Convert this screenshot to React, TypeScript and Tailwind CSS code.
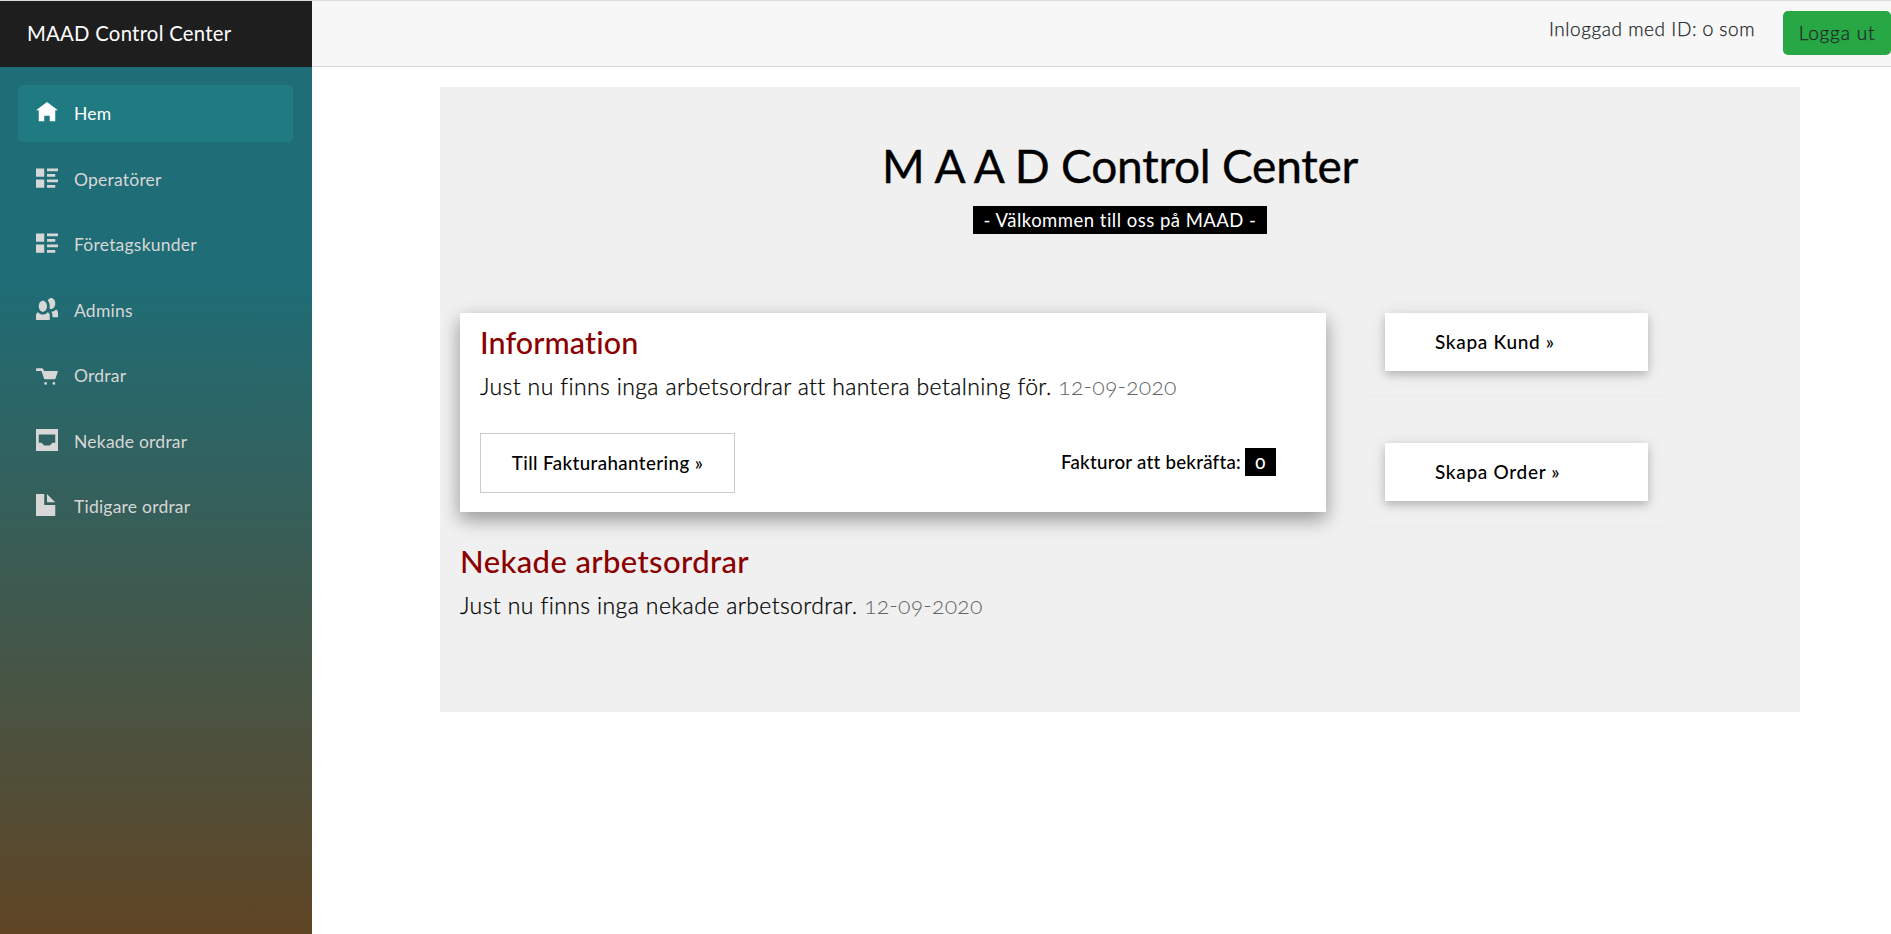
import type { ReactNode } from "react";

type IconName = "home" | "list" | "people" | "cart" | "inbox" | "file";

const ICONS: Record<IconName, ReactNode> = {
  home: <path transform="translate(0 .4)" d="M4 0l-4 3h1v4h2v-2h2v2h2v-4.03l1 .03-4-3z" />,
  list: (
    <path
      transform="translate(0 .55)"
      d="M0 0v3h3v-3h-3zm4 0v1h4v-1h-4zm0 2v1h3v-1h-3zm-4 2v3h3v-3h-3zm4 0v1h4v-1h-4zm0 2v1h3v-1h-3z"
    />
  ),
  people: (
    <path d="M5.5 0c-.51 0-.95.35-1.22.88.45.54.72 1.275.72 2.125 0 .29-.03.55-.09.81.19.11.38.19.59.19.83 0 1.5-.9 1.5-2s-.67-2-1.5-2zm-3 1c-.83 0-1.5.9-1.5 2s.67 2 1.5 2 1.5-.9 1.5-2-.67-2-1.5-2zm4.75 3.16c-.43.51-1.02.82-1.69.84.27.38.44.84.44 1.34v.66h2v-1.66c0-.52-.31-.97-.75-1.19zm-6.5 1c-.44.22-.75.67-.75 1.19v1.66h5v-1.66c0-.52-.31-.97-.75-1.19-.45.53-1.06.84-1.75.84s-1.3-.32-1.75-.84z" />
  ),
  cart: (
    <path
      transform="translate(0 1.95)"
      d="M.34 0a.5.5 0 0 0 .16 1h1.5l.09.25.41 1.25.41 1.16c.04.13.21.34.34.34h3.5c.14 0 .3-.21.34-.34l.81-2.31c.04-.13-.02-.35-.16-.35h-4.75l-.38-.72a.5.5 0 0 0-.44-.28h-1.75zm3.16 5a.5.5 0 1 0 0 1 .5.5 0 0 0 0-1zm3 0a.5.5 0 1 0 0 1 .5.5 0 0 0 0-1z"
    />
  ),
  inbox: <path fillRule="evenodd" d="M0 0v8h8v-8h-8zm1 2h6v3h-1l-1 1h-2l-1-1h-1v-3z" />,
  file: <path d="M0 0v8h7v-4h-4v-4h-3zm4 0v3h3l-3-3z" />,
};

const NAV: { icon: IconName; label: string; active?: boolean }[] = [
  { icon: "home", label: "Hem", active: true },
  { icon: "list", label: "Operatörer" },
  { icon: "list", label: "Företagskunder" },
  { icon: "people", label: "Admins" },
  { icon: "cart", label: "Ordrar" },
  { icon: "inbox", label: "Nekade ordrar" },
  { icon: "file", label: "Tidigare ordrar" },
];

function NavItem({ icon, label, active }: { icon: IconName; label: string; active?: boolean }) {
  return (
    <a
      className={
        active
          ? "flex h-[57px] items-start rounded-[5px] bg-[#1f7a82] pl-[18px] text-white"
          : "flex h-[57px] items-start rounded-[5px] pl-[18px] text-[#d7d7d7]"
      }
    >
      <svg viewBox="0 0 8 8" className="mt-4 h-[22px] w-[22px] shrink-0 fill-current">
        {ICONS[icon]}
      </svg>
      <span className="ml-4 text-[17.5px] leading-[58px] tracking-[0.22px]">{label}</span>
    </a>
  );
}

function ActionCard({ label }: { label: string }) {
  return (
    <div className="h-[130px]">
      <div className="ml-5 h-[58px] w-[263px] bg-white pl-[50px] text-[19px] leading-[58px] font-medium tracking-[0.68px] shadow-[0_4px_8px_rgba(0,0,0,0.18),0_2px_16px_rgba(0,0,0,0.1)]">
        {label}
      </div>
      <div className="mt-[25px] h-px w-[302px] bg-[#ececec]" />
    </div>
  );
}

export default function App() {
  return (
    <div className="flex h-[934px] flex-col overflow-hidden bg-white font-['Lato','Liberation_Sans',sans-serif] text-black [font-variant-ligatures:none] [font-variant-numeric:oldstyle-nums]">
      <div className="h-px shrink-0 bg-[#dadade]" />
      <div className="flex min-h-0 flex-1">
        <aside className="flex w-[312px] shrink-0 flex-col bg-[linear-gradient(180deg,#1f6d76_30%,#604525_100%)]">
          <div className="h-[66px] bg-[#1e1e1e] pl-[27px] text-[20.3px] leading-[64px] tracking-[0.27px] text-white">
            MAAD Control Center
          </div>
          <nav className="flex flex-col gap-[8.5px] pt-[18px] pr-[19px] pl-[18px]">
            {NAV.map((item) => (
              <NavItem key={item.label} {...item} />
            ))}
          </nav>
        </aside>

        <div className="flex min-w-0 flex-1 flex-col">
          <header className="flex h-[66px] shrink-0 justify-end border-b border-[#d6d5d5] bg-[#f7f7f7] font-light text-[#212529] [-webkit-text-stroke:0.25px]">
            <span className="mr-7 text-[19px] leading-[56px] tracking-[0.57px]">Inloggad med ID: 0 som</span>
            <button className="mt-[10px] h-11 w-[108px] rounded-[5px] bg-[#28a745] text-[19px] leading-[44px] tracking-[0.85px]">
              Logga ut
            </button>
          </header>

          <main className="mt-5 ml-[128px] h-[625px] w-[1360px] bg-[#f0f0f0]">
            <div className="flex h-[226px] flex-col items-center pt-[51px]">
              <h1 className="text-[46px] leading-[56px] tracking-[-0.22px] [-webkit-text-stroke:0.4px]">
                M A A D Control Center
              </h1>
              <div className="mt-3 h-7 w-[294px] bg-black text-center text-[18.5px] leading-7 tracking-[0.48px] whitespace-nowrap text-white">
                - Välkommen till oss på MAAD -
              </div>
            </div>

            <div className="flex">
              <div className="w-[925px]">
                <section className="ml-5 h-[199px] w-[866px] bg-white px-5 pt-[10px] shadow-[0_8px_16px_rgba(0,0,0,0.22),0_6px_20px_rgba(0,0,0,0.19)]">
                  <h2 className="text-[30.5px] leading-[39px] font-medium tracking-[0.1px] text-[#8b0000]">Information</h2>
                  <p className="mt-[5px] text-[23px] leading-[39px] font-light tracking-[0.37px] whitespace-nowrap [-webkit-text-stroke:0.25px]">
                    Just nu finns inga arbetsordrar att hantera betalning för.{" "}
                    <span className="tracking-[0.2px] text-[#666] [-webkit-text-stroke:0px]">12-09-2020</span>
                  </p>
                  <div className="mt-[27px] flex">
                    <button className="h-[60px] w-[255px] border border-[#ccc] text-[18.7px] font-medium tracking-[0.42px]">
                      Till Fakturahantering »
                    </button>
                    <div className="mt-[15px] ml-[326px] flex text-[18.7px] leading-7 font-medium tracking-[0.25px] whitespace-nowrap">
                      <span className="w-[184px]">Fakturor att bekräfta:</span>
                      <span className="h-7 w-[31px] bg-black text-center text-white">0</span>
                    </div>
                  </div>
                </section>
                <section className="pt-[30px] pl-5">
                  <h2 className="text-[31px] leading-[39px] font-medium tracking-[0.38px] text-[#8b0000]">Nekade arbetsordrar</h2>
                  <p className="mt-[5px] text-[23px] leading-[39px] font-light tracking-[0.39px] whitespace-nowrap [-webkit-text-stroke:0.25px]">
                    Just nu finns inga nekade arbetsordrar.{" "}
                    <span className="tracking-[0.2px] text-[#666] [-webkit-text-stroke:0px]">12-09-2020</span>
                  </p>
                </section>
                <div className="mt-[33px] h-px w-[905px] bg-[#ededed]" />
              </div>
              <div>
                <ActionCard label="Skapa Kund »" />
                <ActionCard label="Skapa Order »" />
              </div>
            </div>
          </main>
        </div>
      </div>
    </div>
  );
}
